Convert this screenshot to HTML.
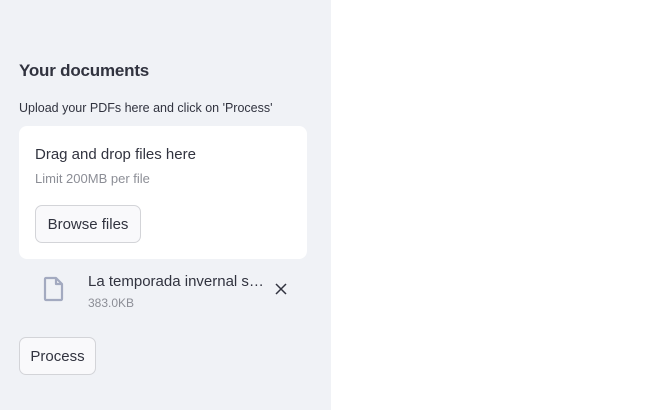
<!DOCTYPE html>
<html><head><style>
body{margin:0;width:652px;height:410px;background:#fff;font-family:"Liberation Sans",sans-serif;color:#31333f;position:relative;overflow:hidden}
.side{position:absolute;left:0;top:0;width:331px;height:410px;background:#f0f2f6}
.a{position:absolute;white-space:nowrap}
.btn{position:absolute;background:#f9f9fb;border:1px solid #d3d4d8;border-radius:7px;box-sizing:border-box;font-size:15px;display:flex;align-items:center;justify-content:center}
</style></head><body>
<div class="side">
<div class="a" style="left:19px;top:61px;font-size:17px;font-weight:bold;letter-spacing:-0.2px">Your documents</div>
<div class="a" style="left:19px;top:101px;font-size:12.5px">Upload your PDFs here and click on 'Process'</div>
<div class="a" style="left:19px;top:126px;width:288px;height:133px;background:#fff;border-radius:8px"></div>
<div class="a" style="left:35px;top:146px;font-size:15px">Drag and drop files here</div>
<div class="a" style="left:35px;top:171px;font-size:13px;color:#8c8e96">Limit 200MB per file</div>
<div class="btn" style="left:35px;top:205px;width:106px;height:38px">Browse files</div>
<svg class="a" style="left:43px;top:276px" width="22" height="26" viewBox="0 0 22 26"><path d="M3 2h10l6 6v15a1 1 0 0 1-1 1H3a1 1 0 0 1-1-1V3a1 1 0 0 1 1-1z M13 2v6h6" fill="none" stroke="#a3aac0" stroke-width="2.2" stroke-linejoin="round"/></svg>
<div class="a" style="left:88px;top:273px;font-size:15px">La temporada invernal s…</div>
<div class="a" style="left:88px;top:296px;font-size:12px;color:#8c8e96">383.0KB</div>
<svg class="a" style="left:275px;top:283px" width="12" height="12" viewBox="0 0 12 12"><path d="M1 1L11 11M11 1L1 11" stroke="#31333f" stroke-width="1.5"/></svg>
<div class="btn" style="left:19px;top:337px;width:77px;height:38px">Process</div>
</div>
</body></html>
